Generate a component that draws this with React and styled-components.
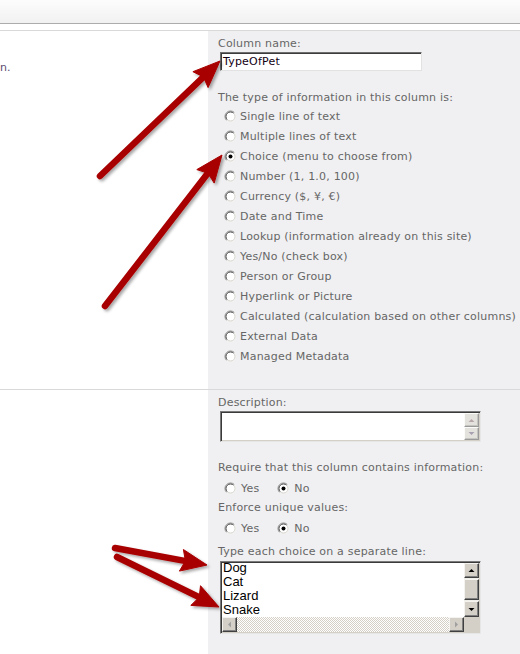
import React from "react";
import styled, { createGlobalStyle } from "styled-components";

const GlobalStyle = createGlobalStyle`
  html, body { margin: 0; padding: 0; background: #fff; }
  body { font-family: "DejaVu Sans", Verdana, sans-serif; }
`;

const Page = styled.div`
  position: relative;
  width: 520px;
  height: 654px;
  overflow: hidden;
  background: #fff;
  display: flex;
  flex-direction: column;
`;

const TopBar = styled.div`
  flex: none;
  height: 23px;
  background: linear-gradient(#fdfdfd, #f1f1f1);
  border-bottom: 1px solid #acacac;
`;

const Spacer = styled.div`
  flex: none;
  height: 6px;
`;

const Section = styled.div`
  display: grid;
  grid-template-columns: 208px 1fr;
  border-top: 1px solid #d9d9d9;
  flex: ${(p) => (p.$grow ? "1 1 auto" : "none")};
`;

const LeftCell = styled.div`
  background: #fff;
  padding-top: 30px;
  font-size: 11px;
  line-height: 14px;
  color: #5b4d70;
`;

const RightCell = styled.div`
  background: #f0f0f2;
  padding: 6px 0 ${(p) => p.$pb || 0}px 10px;
  display: flex;
  flex-direction: column;
  align-items: flex-start;
`;

const Label = styled.div`
  font-size: 11px;
  line-height: 14px;
  letter-spacing: 0.2px;
  color: #666;
  white-space: nowrap;
  margin-top: ${(p) => p.$mt || 0}px;
`;

const TextInput = styled.div`
  box-sizing: border-box;
  margin: 1px 0 0 2px;
  width: 202px;
  height: 19px;
  background: #fff;
  border: 1px solid;
  border-color: #6e6e6e #e2e2e2 #e2e2e2 #6e6e6e;
  box-shadow: inset 1px 1px 0 #3c3c3c;
  padding: 1px 0 0 2px;
  font-size: 11px;
  line-height: 15px;
  letter-spacing: 0.2px;
  color: #120012;
`;

const RadioList = styled.div`
  margin-top: 1px;
  display: flex;
  flex-direction: column;
`;

const RadioRow = styled.div`
  height: 20px;
  display: flex;
  align-items: center;
  gap: 3px;
  padding-left: 6px;
  font-size: 11px;
  letter-spacing: 0.2px;
  color: #666;
  white-space: nowrap;
`;

const InlineRadios = styled.div`
  margin-top: 3px;
  height: 20px;
  display: flex;
  align-items: center;
  padding-left: 6px;
  gap: 18px;
`;

const InlineItem = styled.span`
  display: inline-flex;
  align-items: center;
  gap: 4px;
  font-size: 11px;
  letter-spacing: 0.2px;
  color: #666;
`;

const RadioBox = styled.span`
  flex: none;
  display: inline-flex;
  width: 13px;
  height: 13px;
`;

const Radio = ({ checked }) => (
  <RadioBox>
    <svg width="13" height="13" viewBox="0 0 13 13">
      <circle cx="6.5" cy="6.5" r="5" fill="#fff" />
      <path d="M2.6 10.4 A5.5 5.5 0 0 1 10.4 2.6" fill="none" stroke="#8a8a8a" strokeWidth="1" />
      <path d="M10.4 2.6 A5.5 5.5 0 0 1 2.6 10.4" fill="none" stroke="#f4f4f4" strokeWidth="1" />
      <path d="M3.3 9.7 A4.5 4.5 0 0 1 9.7 3.3" fill="none" stroke="#4a4a4a" strokeWidth="1" />
      <path d="M9.7 3.3 A4.5 4.5 0 0 1 3.3 9.7" fill="none" stroke="#d6d3cc" strokeWidth="1" />
      {checked && <circle cx="6.5" cy="6.5" r="2" fill="#000" />}
    </svg>
  </RadioBox>
);

const AreaBox = styled.div`
  box-sizing: border-box;
  margin: ${(p) => p.$mt || 0}px 0 0 2px;
  width: 261px;
  height: ${(p) => p.$h}px;
  background: #fff;
  border: 1px solid;
  border-color: #7a7a7a #e6e6e6 #e6e6e6 #7a7a7a;
  box-shadow: inset 1px 1px 0 #3a3a3a, inset -1px -1px 0 #d4d0c8;
  padding: 1px;
  display: grid;
  grid-template-columns: 1fr 15px;
  grid-template-rows: ${(p) => (p.$hscroll ? "1fr 15px" : "1fr")};
`;

const AreaText = styled.div`
  padding-left: 1px;
  margin-top: -2px;
  font-family: "Liberation Sans", Arial, sans-serif;
  font-size: 13px;
  line-height: 14px;
  color: #000;
`;

const VScroll = styled.div`
  display: flex;
  flex-direction: column;
  justify-content: space-between;
  background: ${(p) => (p.$track ? "#efeee9" : "transparent")};
`;

const ScrollBtn = styled.div`
  box-sizing: border-box;
  width: 15px;
  height: ${(p) => p.$h}px;
  flex: none;
  background: ${(p) => (p.$light ? "#e4e2dd" : "#d4d0c8")};
  border: 1px solid;
  border-color: ${(p) => (p.$light ? "#fbfbfa #9a9a9a #9a9a9a #fbfbfa" : "#f4f3ef #404040 #404040 #f4f3ef")};
  box-shadow: inset -1px -1px 0 ${(p) => (p.$light ? "#c6c4be" : "#808080")};
  display: flex;
  align-items: center;
  justify-content: center;
`;

const HScroll = styled.div`
  display: flex;
  justify-content: space-between;
  background: repeating-conic-gradient(#d4d0c8 0 25%, #ffffff 0 50%) 0 0 / 2px 2px;
`;

const Corner = styled.div`
  background: #d4d0c8;
`;

const Tri = ({ dir, color }) => {
  const pts = {
    up: "0.5,4 3.5,1 6.5,4",
    down: "0.5,1 3.5,4 6.5,1",
    left: "4,0.5 1,3.5 4,6.5",
    right: "1,0.5 4,3.5 1,6.5",
  }[dir];
  const vertical = dir === "up" || dir === "down";
  return (
    <svg width={vertical ? 7 : 5} height={vertical ? 5 : 7} viewBox={vertical ? "0 0 7 5" : "0 0 5 7"}>
      <polygon points={pts} fill={color} />
    </svg>
  );
};

const Overlay = styled.svg`
  position: absolute;
  left: 0;
  top: 0;
  width: 520px;
  height: 654px;
  pointer-events: none;
`;

const arrows = [
  { x1: 100, y1: 176, x2: 220, y2: 61, hl: 27, hw: 22 },
  { x1: 105, y1: 306, x2: 222, y2: 155, hl: 27, hw: 22 },
  { x1: 115, y1: 548, x2: 207, y2: 565, hl: 26, hw: 22 },
  { x1: 117, y1: 557, x2: 219, y2: 607, hl: 26, hw: 22 },
];

function arrowGeom({ x1, y1, x2, y2, hl, hw }) {
  const dx = x2 - x1;
  const dy = y2 - y1;
  const L = Math.hypot(dx, dy);
  const ux = dx / L;
  const uy = dy / L;
  const nx = -uy;
  const ny = ux;
  const bx = x2 - ux * hl;
  const by = y2 - uy * hl;
  const h = hw / 2;
  const notch = 4;
  const head = [
    [x2, y2],
    [bx + nx * h, by + ny * h],
    [bx + ux * notch, by + uy * notch],
    [bx - nx * h, by - ny * h],
  ]
    .map((p) => p.map((v) => v.toFixed(1)).join(","))
    .join(" ");
  return { head, sx: bx + ux * (notch + 2), sy: by + uy * (notch + 2) };
}

const radioOptions = [
  "Single line of text",
  "Multiple lines of text",
  "Choice (menu to choose from)",
  "Number (1, 1.0, 100)",
  "Currency ($, ¥, €)",
  "Date and Time",
  "Lookup (information already on this site)",
  "Yes/No (check box)",
  "Person or Group",
  "Hyperlink or Picture",
  "Calculated (calculation based on other columns)",
  "External Data",
  "Managed Metadata",
];

const YesNo = () => (
  <InlineRadios>
    <InlineItem>
      <Radio />
      Yes
    </InlineItem>
    <InlineItem>
      <Radio checked />
      No
    </InlineItem>
  </InlineRadios>
);

export default function App() {
  return (
    <>
      <GlobalStyle />
      <Page>
        <TopBar />
        <Spacer />
        <Section>
          <LeftCell>n.</LeftCell>
          <RightCell $pb={23}>
            <Label>Column name:</Label>
            <TextInput>TypeOfPet</TextInput>
            <Label $mt={20}>The type of information in this column is:</Label>
            <RadioList>
              {radioOptions.map((o, i) => (
                <RadioRow key={o}>
                  <Radio checked={i === 2} />
                  {o}
                </RadioRow>
              ))}
            </RadioList>
          </RightCell>
        </Section>
        <Section $grow>
          <LeftCell />
          <RightCell>
            <Label>Description:</Label>
            <AreaBox $mt={1} $h={31}>
              <AreaText />
              <VScroll>
                <ScrollBtn $h={14} $light>
                  <Tri dir="up" color="#b8a8ac" />
                </ScrollBtn>
                <ScrollBtn $h={13} $light>
                  <Tri dir="down" color="#a8a0b0" />
                </ScrollBtn>
              </VScroll>
            </AreaBox>
            <Label $mt={19}>Require that this column contains information:</Label>
            <YesNo />
            <Label $mt={3}>Enforce unique values:</Label>
            <YesNo />
            <Label $mt={7}>Type each choice on a separate line:</Label>
            <AreaBox $mt={2} $h={73} $hscroll>
              <AreaText>
                Dog
                <br />
                Cat
                <br />
                Lizard
                <br />
                Snake
              </AreaText>
              <VScroll $track>
                <ScrollBtn $h={15}>
                  <Tri dir="up" color="#000" />
                </ScrollBtn>
                <ScrollBtn $h={21} />
                <ScrollBtn $h={16}>
                  <Tri dir="down" color="#000" />
                </ScrollBtn>
              </VScroll>
              <HScroll>
                <ScrollBtn $h={15}>
                  <Tri dir="left" color="#a0a0a0" />
                </ScrollBtn>
                <ScrollBtn $h={15}>
                  <Tri dir="right" color="#a0a0a0" />
                </ScrollBtn>
              </HScroll>
              <Corner />
            </AreaBox>
          </RightCell>
        </Section>
        <Overlay viewBox="0 0 520 654">
          <defs>
            <filter id="arrowShadow" x="-20%" y="-20%" width="140%" height="140%">
              <feDropShadow dx="2" dy="2" stdDeviation="1.5" floodColor="#000" floodOpacity="0.35" />
            </filter>
          </defs>
          {arrows.map((a, i) => {
            const g = arrowGeom(a);
            return (
              <g key={i} filter="url(#arrowShadow)" fill="#a80000" stroke="#a80000">
                <line x1={a.x1} y1={a.y1} x2={g.sx} y2={g.sy} strokeWidth="6.5" strokeLinecap="round" />
                <polygon points={g.head} strokeWidth="1" strokeLinejoin="round" />
              </g>
            );
          })}
        </Overlay>
      </Page>
    </>
  );
}
